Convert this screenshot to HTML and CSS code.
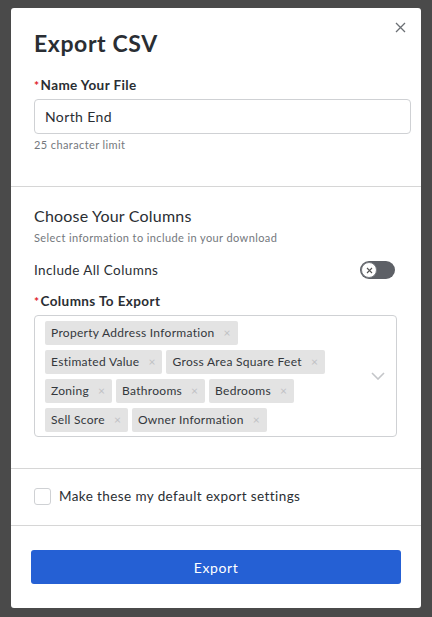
FILE: index.html
```html
<!DOCTYPE html>
<html>
<head>
<meta charset="utf-8">
<link rel="stylesheet" href="styles.css">
</head>
<body>
<div class="modal">
  <button class="close" aria-label="Close">
    <svg width="11" height="11" viewBox="0 0 11 11"><path d="M1 1L10 10M10 1L1 10" stroke="#6b6f74" stroke-width="1.3" fill="none"/></svg>
  </button>
  <section class="sec sec-top">
    <h1 class="title">Export CSV</h1>
    <label class="label"><span class="req">*</span>Name Your File</label>
    <div class="input">North End</div>
    <div class="hint">25 character limit</div>
  </section>
  <section class="sec sec-cols">
    <h2 class="sub">Choose Your Columns</h2>
    <div class="hint2">Select information to include in your download</div>
    <div class="row-toggle">
      <span class="toggle-label">Include All Columns</span>
      <span class="toggle"><span class="knob"><svg width="7" height="7" viewBox="0 0 7 7"><path d="M1 1L6 6M6 1L1 6" stroke="#555" stroke-width="1.1"/></svg></span></span>
    </div>
    <label class="label label2"><span class="req">*</span>Columns To Export</label>
    <div class="multi">
      <div class="tags">
        <span class="tag">Property Address Information<i>×</i></span>
        <span class="tag">Estimated Value<i>×</i></span>
        <span class="tag">Gross Area Square Feet<i>×</i></span>
        <span class="tag">Zoning<i>×</i></span>
        <span class="tag">Bathrooms<i>×</i></span>
        <span class="tag">Bedrooms<i>×</i></span>
        <span class="tag">Sell Score<i>×</i></span>
        <span class="tag">Owner Information<i>×</i></span>
      </div>
      <svg class="chev" width="14" height="8" viewBox="0 0 14 8"><path d="M1 1L7 7L13 1" stroke="#c4c6c9" stroke-width="1.6" fill="none"/></svg>
    </div>
  </section>
  <section class="sec sec-check">
    <span class="checkbox"></span>
    <span class="check-label">Make these my default export settings</span>
  </section>
  <section class="sec sec-btn">
    <button class="export">Export</button>
  </section>
</div>
</body>
</html>
```
FILE: styles.css
```css
* { box-sizing: border-box; }
html, body { margin: 0; padding: 0; }
body {
  background: #4a4a4a;
  width: 432px;
  height: 617px;
  padding: 8px 11px 9px 11px;
  font-family: Lato, "Open Sans", sans-serif;
  color: #2a2e33;
  letter-spacing: 0.4px;
}
.modal {
  position: relative;
  background: #fff;
  border-radius: 3px;
  height: 600px;
  display: flex;
  flex-direction: column;
}
.close {
  position: absolute;
  top: 14px;
  right: 15px;
  border: 0;
  background: none;
  padding: 0;
  width: 11px;
  height: 11px;
  line-height: 0;
}
.sec { border-bottom: 1px solid #d6d6d6; }
.sec-top { padding: 21px 10px 0 23px; height: 179px; }
.title {
  margin: 0;
  font-size: 23px;
  font-weight: 700;
  line-height: 28px;
  letter-spacing: 0.6px;
}
.label {
  display: block;
  margin-top: 20px;
  font-size: 13.5px;
  font-weight: 700;
  line-height: 16px;
}
.req { color: #e0202a; font-size: 12px; margin-right: 1px; }
.input {
  margin-top: 5px;
  height: 35px;
  border: 1px solid #cfd1d4;
  border-radius: 4px;
  padding: 0 10px;
  font-size: 14px;
  line-height: 33px;
}
.hint {
  margin-top: 4px;
  font-size: 11px;
  color: #74787d;
  line-height: 14px;
}
.sec-cols { padding: 19px 24px 0 23px; height: 282px; }
.sub {
  margin: 0;
  font-size: 16px;
  font-weight: 400;
  line-height: 20px;
  letter-spacing: 0.2px;
}
.hint2 {
  margin-top: 5px;
  font-size: 11px;
  color: #74787d;
  line-height: 14px;
}
.row-toggle {
  margin-top: 16px;
  display: flex;
  justify-content: space-between;
  align-items: center;
  height: 18px;
}
.toggle-label { font-size: 13.5px; }
.toggle {
  width: 35px;
  height: 18px;
  border-radius: 9px;
  background: #5d6066;
  display: flex;
  align-items: center;
  padding-left: 1px;
  margin-right: 2px;
}
.knob {
  width: 16px;
  height: 16px;
  border-radius: 50%;
  background: #fff;
  border: 1px solid #7a7d82;
  display: flex;
  align-items: center;
  justify-content: center;
}
.label2 { margin-top: 14px; }
.multi {
  margin-top: 5px;
  border: 1px solid #cfd1d4;
  border-radius: 4px;
  height: 122px;
  display: flex;
  align-items: center;
  padding: 4px 10px 4px 10px;
}
.tags {
  flex: 1;
  display: flex;
  flex-wrap: wrap;
  gap: 5px 4px;
  padding-right: 30px;
}
.tag {
  background: #e3e3e3;
  border-radius: 2px;
  height: 24px;
  line-height: 24px;
  padding: 0 7px 0 6px;
  font-size: 12px;
  letter-spacing: 0.3px;
  color: #33373c;
  display: inline-flex;
  align-items: center;
}
.tag i {
  font-style: normal;
  color: #bfc1c3;
  font-size: 12px;
  margin-left: 9px;
  letter-spacing: 0;
}
.chev { flex: none; margin-right: 1px; }
.sec-check {
  height: 57px;
  display: flex;
  align-items: center;
  padding: 0 23px 2px 23px;
}
.checkbox {
  width: 17px;
  height: 17px;
  border: 1px solid #cfd1d4;
  border-radius: 3px;
  margin-right: 8px;
}
.check-label { font-size: 13.5px; }
.sec-btn { border-bottom: 0; padding: 24px 20px 0 20px; }
.export {
  width: 370px;
  height: 34px;
  background: #2560d4;
  color: #fff;
  border: 0;
  border-radius: 3px;
  font-family: Lato, "Open Sans", sans-serif;
  font-size: 14px;
  letter-spacing: 0.6px;
}
```
